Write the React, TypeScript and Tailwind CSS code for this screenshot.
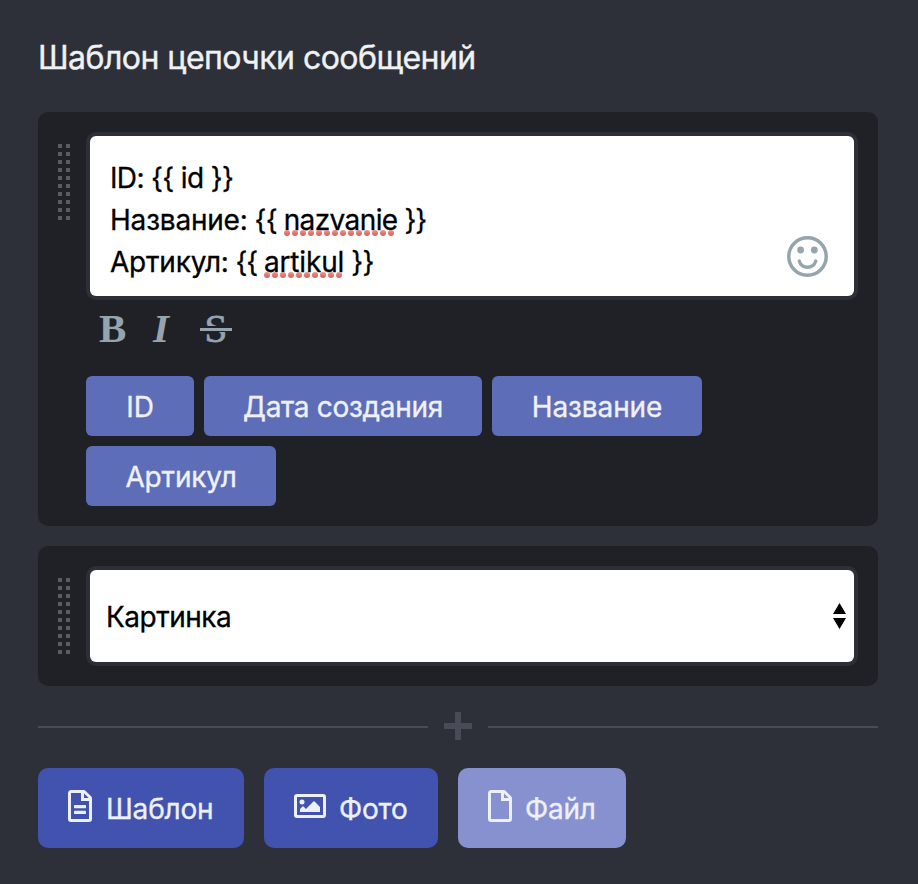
import React from "react";

function Grip() {
  return (
    <svg width="12" height="76" viewBox="0 0 12 76" fill="#5b5c60" shapeRendering="crispEdges" className="block">
      {Array.from({ length: 10 }, (_, i) => (
        <g key={i}>
          <rect x="0" y={i * 8} width="4" height="4" />
          <rect x="8" y={i * 8} width="4" height="4" />
        </g>
      ))}
    </svg>
  );
}

function Misspelled({ word, dots, className }: { word: string; dots: number; className: string }) {
  return (
    <span className={`relative inline-block ${className}`}>
      {word}
      <svg className="absolute left-0 top-[31px]" width={dots * 8} height="6" viewBox={`0 0 ${dots * 8} 6`}>
        <defs>
          <linearGradient id={`dot-${word}`} x1="0" y1="0" x2="0" y2="1">
            <stop offset="0" stopColor="#f0948c" />
            <stop offset="1" stopColor="#da5c53" />
          </linearGradient>
        </defs>
        {Array.from({ length: dots }, (_, i) => (
          <circle key={i} cx={3 + i * 8} cy="3" r="3" fill={`url(#dot-${word})`} />
        ))}
      </svg>
    </span>
  );
}

function FileIcon({ lines }: { lines?: boolean }) {
  return (
    <svg width="24" height="32" viewBox="0 0 24 32" fill="none" className="block">
      <path
        d="M3 1.5H15.6Q16.2 1.5 16.7 2L22 7.3Q22.5 7.800 22.5 8.4V29A1.5 1.5 0 0 1 21 30.5H3A1.5 1.5 0 0 1 1.5 29V3A1.5 1.5 0 0 1 3 1.5Z"
        stroke="currentColor"
        strokeWidth="3"
      />
      <path d="M14.5 2V9.5H22" stroke="currentColor" strokeWidth="3" />
      {lines && (
        <g fill="currentColor">
          <rect x="6" y="15" width="12" height="3.2" rx="0.6" />
          <rect x="6" y="20.8" width="12" height="3.2" rx="0.6" />
        </g>
      )}
    </svg>
  );
}

function PhotoIcon() {
  return (
    <svg width="32" height="24" viewBox="0 0 32 24" className="block">
      <rect x="1.5" y="1.5" width="29" height="21" rx="1.5" fill="none" stroke="currentColor" strokeWidth="3" />
      <circle cx="8" cy="8" r="2.5" fill="currentColor" />
      <path d="M6 18V15L8.5 12.5Q9 12 9.5 12.5L12 15L19.4 7.5Q20 7 20.6 7.5L26 13V18Z" fill="currentColor" />
    </svg>
  );
}

function Tag({ label, className }: { label: string; className: string }) {
  return (
    <button className={`flex h-[60px] items-center justify-center whitespace-nowrap rounded-[6px] bg-[#5d6db8] pt-px text-[28px] text-[#f0f1f8] [-webkit-text-stroke:0.35px_currentColor] ${className}`}>
      {label}
    </button>
  );
}

export default function App() {
  return (
    <div className="h-[884px] w-[918px] overflow-hidden bg-[#2d3038] px-[38px] font-[Inter,sans-serif]">
      <h1 className="flex h-[112px] items-center whitespace-nowrap pt-[3px] text-[32px] tracking-[-0.53px] text-[#f0f1f3] [-webkit-text-stroke:0.4px_currentColor]">
        Шаблон цепочки сообщений
      </h1>

      <section className="flex h-[414px] w-[840px] rounded-[10px] bg-[#202126] pl-5 pt-5">
        <div className="w-7 pt-3">
          <Grip />
        </div>
        <div className="w-[772px]">
          <div className="flex h-[168px] justify-between rounded-[10px] border-4 border-[#2d2f37] bg-[#2d2f37]">
            <div className="flex flex-1 justify-between rounded-[6px] bg-white pl-5 pr-[26px] pt-[21px] text-[28px] leading-[42px] text-black">
              <div className="whitespace-pre [-webkit-text-stroke:0.3px_currentColor]">
                <p className="tracking-[-0.65px]">{"ID: {{ id }}"}</p>
                <p>
                  <span className="tracking-[-0.2px]">Название:</span>
                  <span className="tracking-[-0.9px]">{" {{ "}</span>
                  <Misspelled word="nazvanie" dots={14} className="tracking-[-0.6px]" />
                  <span className="tracking-[-1px]">{" }}"}</span>
                </p>
                <p>
                  <span className="tracking-[-0.2px]">Артикул:</span>
                  <span className="tracking-[-1.1px]">{" {{ "}</span>
                  <Misspelled word="artikul" dots={10} className="tracking-[-0.15px]" />
                  <span className="tracking-[-0.8px]">{" }}"}</span>
                </p>
              </div>
              <svg width="41" height="41" viewBox="0 0 41 41" fill="none" className="mt-[79px] block">
                <circle cx="20.5" cy="20.500" r="18.7" stroke="#95a4ad" strokeWidth="3.5" />
                <circle cx="13.6" cy="14" r="3.4" fill="#95a4ad" />
                <circle cx="27.3" cy="14" r="3.4" fill="#95a4ad" />
                <path d="M12.200 25C14.800 33.300 26.200 33.300 28.800 25" stroke="#95a4ad" strokeWidth="3.3" strokeLinecap="round" />
              </svg>
            </div>
          </div>

          <div className="flex h-[76px] pl-[13px] pt-[3px] font-['Liberation_Serif',serif] text-[41px] leading-[50px] text-[#95a4ad]">
            <span className="w-[54px] font-bold">B</span>
            <span className="w-[47px] font-bold italic">I</span>
            <span className="relative w-8 text-center [-webkit-text-stroke:0.8px_currentColor]">
              S
              <span className="absolute left-0 top-[23px] h-[6px] w-8 border-y-2 border-[#202126] bg-[#95a4ad]" />
              <span className="absolute left-0 top-[25px] h-[3px] w-8 bg-[#95a4ad]" />
            </span>
          </div>

          <div className="flex flex-wrap gap-[10px]">
            <Tag label="ID" className="w-[108px]" />
            <Tag label="Дата создания" className="w-[278px] tracking-[-0.3px]" />
            <Tag label="Название" className="w-[210px] tracking-[-0.1px]" />
            <Tag label="Артикул" className="w-[190px] tracking-[-0.15px]" />
          </div>
        </div>
      </section>

      <section className="mt-5 flex h-[140px] w-[840px] rounded-[10px] bg-[#202126] pl-5 pt-5">
        <div className="w-7 pt-3">
          <Grip />
        </div>
        <div className="flex h-[100px] w-[772px] rounded-[10px] border-4 border-[#2d2f37] bg-[#2d2f37]">
          <div className="flex flex-1 items-center justify-between rounded-[6px] bg-white pl-4 pr-2 text-[28px] text-black">
            <span className="pt-px tracking-[-0.5px] [-webkit-text-stroke:0.3px_currentColor]">Картинка</span>
            <svg width="13" height="26" viewBox="0 0 13 26" className="block">
              <path d="M6.500 0L13 11H0ZM0 15H13L6.500 26Z" fill="#000" />
            </svg>
          </div>
        </div>
      </section>

      <div className="flex h-[82px] w-[840px] items-center gap-4">
        <div className="h-[2px] w-[390px] bg-[#494c55]" />
        <svg width="28" height="28" viewBox="0 0 28 28" className="mb-[2px] block">
          <path d="M12 0H16Q17 0 17 1V11H27Q28 11 28 12V16Q28 17 27 17H17V27Q17 28 16 28H12Q11 28 11 27V17H1Q0 17 0 16V12Q0 11 1 11H11V1Q11 0 12 0Z" fill="#494c58" />
        </svg>
        <div className="h-[2px] w-[390px] bg-[#494c55]" />
      </div>

      <div className="flex gap-5 whitespace-nowrap text-[28px] tracking-[-0.2px] text-[#eef0f8]">
        <button className="flex h-20 w-[206px] items-center rounded-[10px] bg-[#4153af] pl-[30px]">
          <span className="mb-1 mr-[14px]"><FileIcon lines /></span>
          <span className="pt-px [-webkit-text-stroke:0.35px_currentColor]">Шаблон</span>
        </button>
        <button className="flex h-20 w-[174px] items-center rounded-[10px] bg-[#4153af] pl-[30px]">
          <span className="mb-1 mr-[13px]"><PhotoIcon /></span>
          <span className="pt-px [-webkit-text-stroke:0.35px_currentColor]">Фото</span>
        </button>
        <button className="flex h-20 w-[168px] items-center rounded-[10px] bg-[#8791d0] pl-[30px]">
          <span className="mb-1 mr-[13px]"><FileIcon /></span>
          <span className="pt-px [-webkit-text-stroke:0.35px_currentColor]">Файл</span>
        </button>
      </div>
    </div>
  );
}
